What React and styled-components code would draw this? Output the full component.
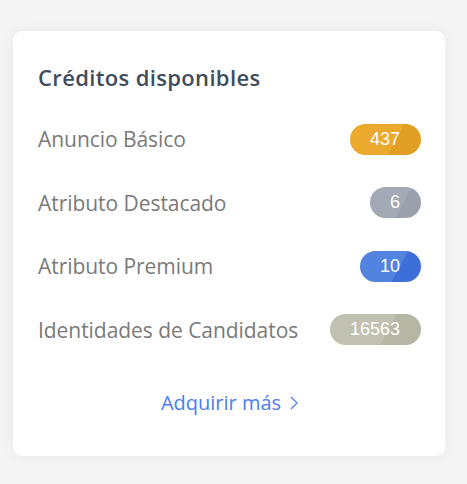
import React from "react";
import styled, { createGlobalStyle } from "styled-components";

const Global = createGlobalStyle`
  html, body { margin: 0; padding: 0; background: #f4f4f4; }
  body { font-family: "Open Sans", "Liberation Sans", sans-serif; }
`;

const Page = styled.div`
  padding: 31px 22px 28px 13px;
`;

const Card = styled.section`
  background: #fff;
  border-radius: 9px;
  box-shadow: 0 0 14px rgba(0, 0, 0, 0.05);
  padding: 33px 24px 41px 25px;
  height: 425px;
  box-sizing: border-box;
  display: flex;
  flex-direction: column;
`;

const Title = styled.h2`
  margin: 0;
  font-size: 22px;
  line-height: 26px;
  font-weight: 600;
  color: #3f4c5c;
  letter-spacing: 0.35px;
`;

const List = styled.div`
  margin-top: 33px;
  display: flex;
  flex-direction: column;
  gap: 31.5px;
`;

const Row = styled.div`
  display: flex;
  align-items: center;
  justify-content: space-between;
  height: 32px;
`;

const Label = styled.span`
  font-size: 21px;
  color: #7a7a7a;
  font-weight: 400;
  letter-spacing: -0.05px;
`;

const Badge = styled.span`
  display: inline-flex;
  align-items: center;
  justify-content: center;
  height: 31px;
  padding: 0 21px 0 20px;
  border-radius: 15.5px;
  color: #fff;
  font-family: "Liberation Sans", Arial, sans-serif;
  font-size: 18px;
  background: linear-gradient(
    -62deg,
    ${(p) => p.$dark} 0 38%,
    ${(p) => p.$light} 38% 100%
  );
`;

const Link = styled.a`
  margin-top: 44px;
  align-self: center;
  color: #4a7cf2;
  font-size: 20px;
  line-height: 26px;
  text-decoration: none;
  display: inline-flex;
  align-items: center;
  gap: 9px;
`;

const items = [
  { label: "Anuncio Básico", value: "437", light: "#eba92d", dark: "#e19e24" },
  { label: "Atributo Destacado", value: "6", light: "#a3aab5", dark: "#9aa1ad" },
  { label: "Atributo Premium", value: "10", light: "#5283de", dark: "#3e6fd8" },
  { label: "Identidades de Candidatos", value: "16563", light: "#c1c1b1", dark: "#b6b6a5" },
];

export default function App() {
  return (
    <>
      <Global />
      <Page>
        <Card>
          <Title>Créditos disponibles</Title>
          <List>
            {items.map((it) => (
              <Row key={it.label}>
                <Label>{it.label}</Label>
                <Badge $light={it.light} $dark={it.dark}>{it.value}</Badge>
              </Row>
            ))}
          </List>
          <Link href="#">
            Adquirir más
            <svg width="8" height="14" viewBox="0 0 8 14" fill="none">
              <path d="M1 1l6 6-6 6" stroke="#4a7cf2" strokeWidth="1.2" />
            </svg>
          </Link>
        </Card>
      </Page>
    </>
  );
}
